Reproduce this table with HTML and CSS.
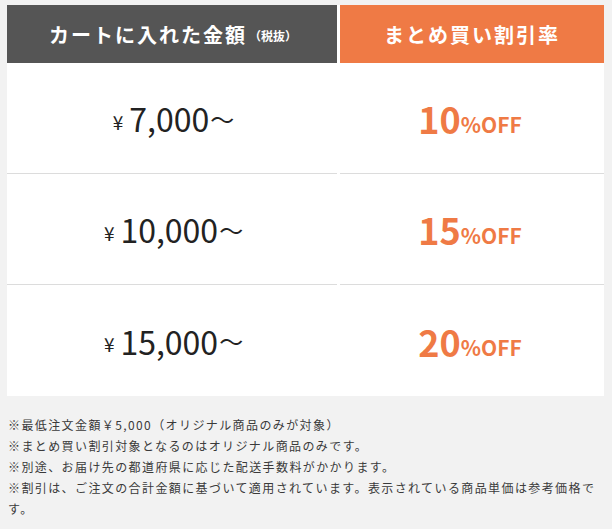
FILE: index.html
```html
<!DOCTYPE html>
<html lang="ja">
<head>
<meta charset="utf-8">
<link rel="stylesheet" href="styles.css">
</head>
<body>
<div class="wrap">
  <div class="table">
    <div class="th th-dark">カートに入れた金額<span class="small">（税抜）</span></div>
    <div class="th th-orange">まとめ買い割引率</div>

    <div class="td price"><span class="yen">¥</span>7,000<span class="tilde">〜</span></div>
    <div class="td rate"><span class="num">10</span><span class="off">%OFF</span></div>

    <div class="td price"><span class="yen">¥</span>10,000<span class="tilde">〜</span></div>
    <div class="td rate"><span class="num">15</span><span class="off">%OFF</span></div>

    <div class="td price last"><span class="yen">¥</span>15,000<span class="tilde">〜</span></div>
    <div class="td rate last"><span class="num">20</span><span class="off">%OFF</span></div>
  </div>
  <div class="notes">
    <p>※最低注文金額￥5,000（オリジナル商品のみが対象）</p>
    <p>※まとめ買い割引対象となるのはオリジナル商品のみです。</p>
    <p>※別途、お届け先の都道府県に応じた配送手数料がかかります。</p>
    <p>※割引は、ご注文の合計金額に基づいて適用されています。表示されている商品単価は参考価格です。</p>
  </div>
</div>
</body>
</html>
```

FILE: styles.css
```css
* { box-sizing: border-box; }
body {
  margin: 0;
  background: #f2f2f2;
  font-family: "Noto Sans CJK JP", "Noto Sans", sans-serif;
  color: #333;
}
.wrap {
  padding: 5px 8px 0 7px;
}
.table {
  display: grid;
  grid-template-columns: 330px 264px;
  column-gap: 3px;
  background: #fff;
  width: 597px;
}
.th {
  height: 58px;
  display: flex;
  align-items: center;
  justify-content: center;
  color: #fff;
  font-weight: 700;
  font-size: 20px;
  letter-spacing: 2px;
}
.th-dark { background: #555555; padding-left: 2px; }
.th-orange { background: #ef7a45; }
.small {
  font-size: 12px;
  letter-spacing: 0;
  margin-left: 2px;
  margin-top: 2px;
}
.td {
  height: 111px;
  border-bottom: 1px solid #dcdcdc;
  display: flex;
  align-items: center;
  justify-content: center;
}
.td.last { border-bottom: none; }
.price {
  font-size: 32px;
  color: #222;
  padding-left: 3px;
}
.yen {
  font-size: 19px;
  margin-right: 6px;
  margin-top: 6px;
}
.tilde {
  font-size: 24px;
  margin-left: 1px;
}
.rate {
  color: #ef7a45;
  font-weight: 700;
  padding-right: 4px;
}
.num { font-size: 36px; }
.off { font-size: 21px; margin-top: 12px; }
.notes {
  margin-top: 18px;
  padding-left: 1px;
  font-size: 12px;
  line-height: 21px;
  letter-spacing: 1.4px;
  color: #3a3a3a;
}
.notes p { margin: 0; }
```
